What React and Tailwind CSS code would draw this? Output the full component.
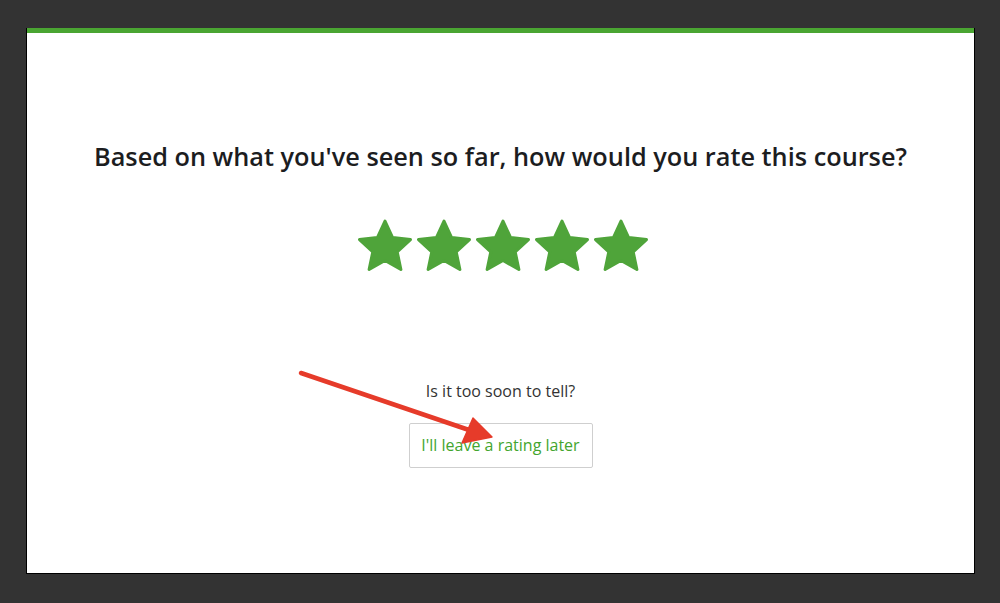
import React from "react";

// --- Star icon (rounded corners) ---
function Star() {
    return (
        <svg width="58" height="56" viewBox="0 0 58 56">
            <path
                d="M29 3 L36.6 19.6 L54.5 21.6 L41.2 33.8 L44.9 51.5 L29 42.5 L13.1 51.5 L16.8 33.8 L3.5 21.6 L21.4 19.6 Z"
                fill="#4fa43a"
                stroke="#4fa43a"
                strokeWidth="3"
                strokeLinejoin="round"
            />
        </svg>
    );
}

export default function App() {
    return (
        <div className="min-h-[603px] w-[1000px] bg-[#333333] pt-[28px] pl-[26px]" style={{ fontFamily: '"Open Sans", sans-serif' }}>
            {/* Card */}
            <div className="relative w-[949px] h-[546px] bg-white border border-black border-t-0">
                <div className="h-[5px] bg-[#4aa532]" />

                <div className="flex flex-col items-center">
                    <h1 className="mt-[105px] text-[25.3px] font-semibold text-[#1c1d1f]">
                        Based on what you've seen so far, how would you rate this course?
                    </h1>

                    {/* Stars */}
                    <div className="mt-[42px] ml-[5px] flex gap-[1px]">
                        <Star />
                        <Star />
                        <Star />
                        <Star />
                        <Star />
                    </div>

                    <p className="mt-[105px] text-[16px] text-[#333]">Is it too soon to tell?</p>

                    <button className="mt-[20px] h-[45px] w-[184px] border border-[#cfcfcf] rounded-[2px] text-[16px] text-[#43a52e] bg-white">
                        I'll leave a rating later
                    </button>
                </div>

                {/* Annotation arrow */}
                <svg className="absolute left-0 top-0 pointer-events-none" width="949" height="546">
                    <line x1="274" y1="345" x2="442" y2="402" stroke="#e63b2a" strokeWidth="4.5" strokeLinecap="round" />
                    <polygon points="465,409 446,390 435,415" fill="#e63b2a" stroke="#e63b2a" strokeWidth="1.5" strokeLinejoin="round" />
                </svg>
            </div>
        </div>
    );
}
